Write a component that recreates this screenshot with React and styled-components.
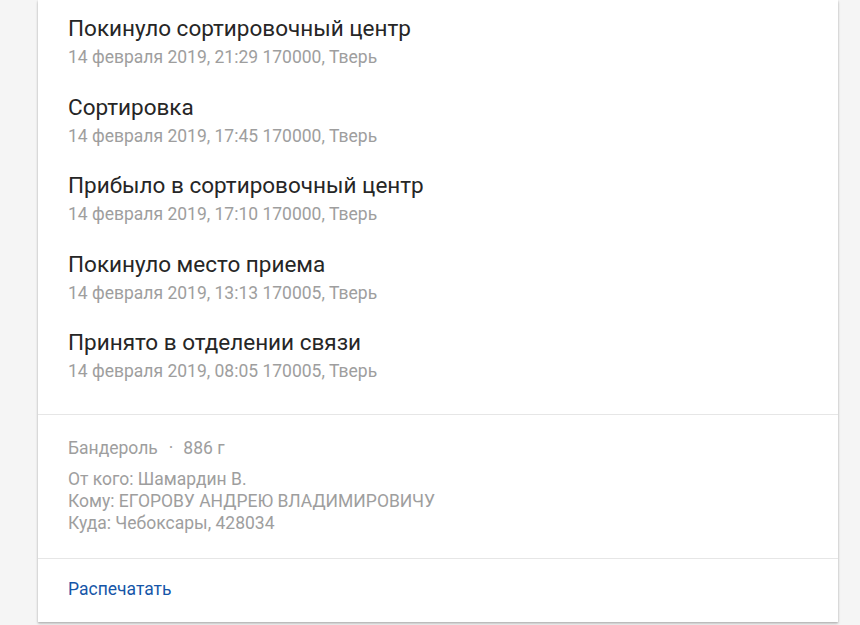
import React from 'react';
import styled, { createGlobalStyle } from 'styled-components';

const GlobalStyle = createGlobalStyle`
    html, body {
        margin: 0;
        padding: 0;
        background: #f5f5f5;
        font-family: Roboto, "Liberation Sans", Arial, sans-serif;
    }
`;

const Page = styled.div`
    padding: 0 22px 0 38px;
    height: 625px;
    overflow: hidden;
`;

const Card = styled.div`
    width: 800px;
    background: #fff;
    box-shadow: 0 1px 2px rgba(0, 0, 0, 0.22), 0 2px 3px rgba(0, 0, 0, 0.12);
`;

const Events = styled.div`
    display: flex;
    flex-direction: column;
    gap: 22.5px;
    padding: 13px 30px 31px;
    border-bottom: 1px solid #e6e6e6;
`;

const Event = styled.div`
    display: flex;
    flex-direction: column;
`;

const EventTitle = styled.div`
    font-size: 22.5px;
    line-height: 30px;
    color: #262626;
`;

const EventMeta = styled.div`
    margin-top: 2px;
    font-size: 17.5px;
    line-height: 24px;
    color: #9e9e9e;
`;

const Info = styled.div`
    padding: 22px 30px 24px;
    border-bottom: 1px solid #e6e6e6;
    font-size: 17.5px;
    line-height: 22px;
    color: #9e9e9e;
`;

const Parcel = styled.div`
    margin-bottom: 9px;
`;

const Dot = styled.span`
    margin: 0 10px 0 11px;
`;

const Footer = styled.div`
    padding: 19px 30px 22px;
`;

const PrintLink = styled.a`
    font-size: 17.5px;
    line-height: 22px;
    color: #1656a8;
    text-decoration: none;
    cursor: pointer;
`;

const events = [
    { title: 'Покинуло сортировочный центр', meta: '14 февраля 2019, 21:29 170000, Тверь' },
    { title: 'Сортировка', meta: '14 февраля 2019, 17:45 170000, Тверь' },
    { title: 'Прибыло в сортировочный центр', meta: '14 февраля 2019, 17:10 170000, Тверь' },
    { title: 'Покинуло место приема', meta: '14 февраля 2019, 13:13 170005, Тверь' },
    { title: 'Принято в отделении связи', meta: '14 февраля 2019, 08:05 170005, Тверь' },
];

export default function App() {
    return (
        <>
            <GlobalStyle />
            <Page>
                <Card>
                    <Events>
                        {events.map(event => (
                            <Event key={event.meta}>
                                <EventTitle>{event.title}</EventTitle>
                                <EventMeta>{event.meta}</EventMeta>
                            </Event>
                        ))}
                    </Events>
                    <Info>
                        <Parcel>
                            Бандероль<Dot>·</Dot>886 г
                        </Parcel>
                        <div>От кого: Шамардин В.</div>
                        <div>Кому: ЕГОРОВУ АНДРЕЮ ВЛАДИМИРОВИЧУ</div>
                        <div>Куда: Чебоксары, 428034</div>
                    </Info>
                    <Footer>
                        <PrintLink>Распечатать</PrintLink>
                    </Footer>
                </Card>
            </Page>
        </>
    );
}
